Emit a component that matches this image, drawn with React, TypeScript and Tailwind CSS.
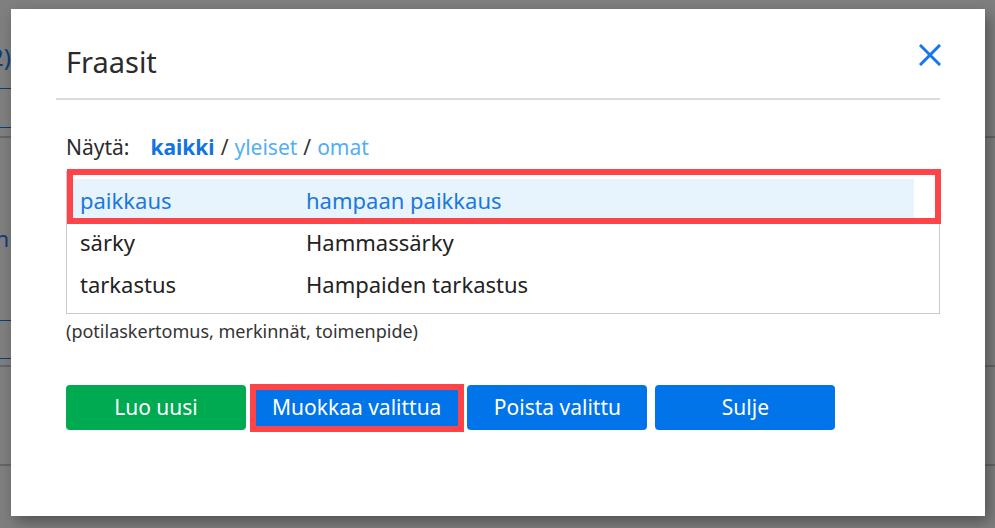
import { useState } from "react";

type Phrase = {
  id: number;
  short: string;
  text: string;
};

const phrases: Phrase[] = [
  { id: 1, short: "paikkaus", text: "hampaan paikkaus" },
  { id: 2, short: "särky", text: "Hammassärky" },
  { id: 3, short: "tarkastus", text: "Hampaiden tarkastus" },
];

// the page under the dialog, only its edges stay visible past the overlay
function PageBehind() {
  return (
    <div className="flex flex-col">
      <div className="h-[44px]" />
      <div className="flex h-[26px] w-[11px] justify-end whitespace-nowrap text-[24px] leading-[26px] text-[#1a7cf2]">
        2)
      </div>
      <div className="h-[18px]" />
      <div className="h-px w-[11px] bg-[#1a7cf2]" />
      <div className="h-[38px]" />
      <div className="h-px w-[11px] bg-[#1a7cf2]" />
      <div className="h-[8px]" />
      <div className="h-[2px] bg-[#c8ccd2]" />
      <div className="h-[90px]" />
      <div className="flex h-[20px] w-[9px] justify-end whitespace-nowrap text-[22px] leading-[20px] text-[#1a7cf2]">
        n
      </div>
      <div className="h-[72px]" />
      <div className="h-px w-[11px] bg-[#1a7cf2]" />
      <div className="h-[37px]" />
      <div className="h-px w-[11px] bg-[#1a7cf2]" />
      <div className="h-[6px]" />
      <div className="h-[2px] bg-[#c8ccd2]" />
      <div className="h-[97px]" />
      <div className="h-[2px] bg-[#c8ccd2]" />
    </div>
  );
}

function CloseIcon() {
  return (
    <svg width="22" height="22" viewBox="0 0 22 22" fill="none">
      <path d="M2 2L20 20M20 2L2 20" stroke="#1677e6" strokeWidth="3" strokeLinecap="square" />
    </svg>
  );
}

export default function App() {
  const [selected, setSelected] = useState(1);
  const [filter, setFilter] = useState("kaikki");

  const filters = ["kaikki", "yleiset", "omat"];

  return (
    <div className="relative h-[528px] w-[995px] overflow-hidden bg-white font-['Noto_Sans',sans-serif] text-[#222]">
      <PageBehind />
      <div className="absolute inset-0 bg-black/50" />

      <div className="absolute left-[11px] top-[9px] h-[507px] w-[974px] bg-white px-[45px] shadow-[4px_6px_14px_rgba(0,0,0,0.35)]">
        <div className="flex h-[91px] items-center justify-between border-b-2 border-[#d7dce1] pl-[10px] pt-[16px]">
          <h1 className="text-[29px] font-normal text-[#2b2b2b]">Fraasit</h1>
          <button className="-mr-[1px] mb-[14px]">
            <CloseIcon />
          </button>
        </div>

        <div className="pl-[10px]">
          <div className="mt-[34px] flex items-center text-[21px] leading-[26px]">
            <span className="mr-[21px] text-[#2b2b2b]">Näytä:</span>
            {filters.map((f, i) => (
              <span key={f} className="flex items-center">
                {i > 0 && <span className="mx-[6px] text-[#333]">/</span>}
                <button
                  onClick={() => setFilter(f)}
                  className={filter === f ? "font-bold text-[#1274e0]" : "text-[#52aef5]"}
                >
                  {f}
                </button>
              </span>
            ))}
          </div>

          <div className="relative mt-[11px]">
            <div className="border border-[#c4cbd4] pb-[8px] pl-[3px] pr-[25px] pt-[7px] text-[22px]">
              {phrases.map((p) => (
                <div
                  key={p.id}
                  onClick={() => setSelected(p.id)}
                  className={
                    "flex h-[42px] cursor-pointer items-center pl-[10px] " +
                    (selected === p.id ? "bg-[#e8f4fd] text-[#1a78e0]" : "")
                  }
                >
                  <span className="w-[226px]">{p.short}</span>
                  <span>{p.text}</span>
                </div>
              ))}
            </div>
            <div className="pointer-events-none absolute left-[1px] top-[-2px] h-[55px] w-[874px] border-[6px] border-[#fd4448]" />
          </div>

          <p className="mt-[4px] text-[18px] text-[#333]">(potilaskertomus, merkinnät, toimenpide)</p>

          <div className="mt-[40px] flex gap-[8px] text-[21px] text-white">
            <button className="h-[45px] min-w-[180px] rounded-[4px] bg-[#00aa50] px-[16px]">Luo uusi</button>
            <div className="relative">
              <button className="h-[45px] min-w-[180px] rounded-[4px] bg-[#0074e8] px-[18px]">Muokkaa valittua</button>
              <div className="pointer-events-none absolute -left-[4px] -right-[5px] -top-[1px] -bottom-[2px] border-[6px] border-[#fd4448]" />
            </div>
            <button className="h-[45px] min-w-[180px] rounded-[4px] bg-[#0074e8] px-[16px]">Poista valittu</button>
            <button className="h-[45px] min-w-[180px] rounded-[4px] bg-[#0074e8] px-[16px]">Sulje</button>
          </div>
        </div>
      </div>
    </div>
  );
}
